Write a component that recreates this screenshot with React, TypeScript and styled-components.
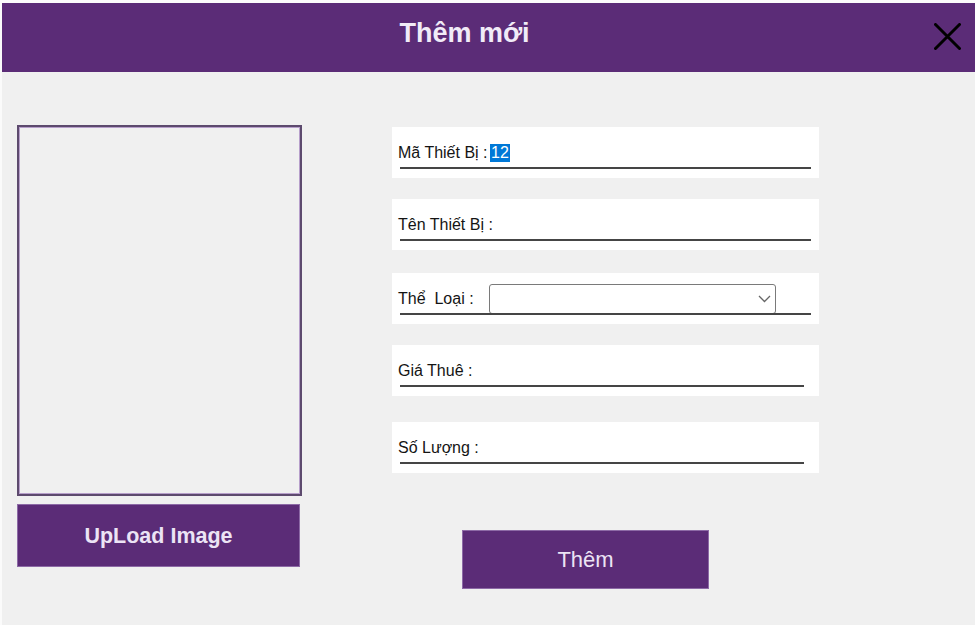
import React from "react";
import styled, { createGlobalStyle } from "styled-components";

const GlobalStyle = createGlobalStyle`
  html, body { margin: 0; padding: 0; }
  body { font-family: "Liberation Sans", Arial, sans-serif; background: #ffffff; }
  * { box-sizing: border-box; }
`;

const PURPLE = "#5B2C77";

const Frame = styled.div`
  width: 975px;
  height: 625px;
  background: #fbfbfb;
  padding: 3px 0 0 2px;
  display: flex;
  flex-direction: column;
  overflow: hidden;
`;

const Header = styled.header`
  height: 69px;
  flex: none;
  background: ${PURPLE};
  display: flex;
  align-items: flex-start;
`;

const Title = styled.h1`
  flex: 1;
  margin: 0;
  padding-top: 17px;
  text-align: center;
  font-size: 27px;
  line-height: 27px;
  font-weight: 700;
  color: #f1ebf7;
`;

const CloseButton = styled.button`
  width: 48px;
  height: 69px;
  border: none;
  background: transparent;
  padding: 20px 0 0 7px;
  display: flex;
  align-items: flex-start;
  justify-content: flex-start;
  cursor: pointer;
`;

const Body = styled.main`
  flex: 1;
  background: #f0f0f0;
  display: flex;
  padding: 53px 0 0 15px;
`;

const LeftColumn = styled.section`
  width: 285px;
  display: flex;
  flex-direction: column;
`;

const ImageBox = styled.div`
  width: 285px;
  height: 371px;
  border: 2px solid #5d4a6e;
  box-shadow: inset 0 0 0 1px #b79fcb;
  background: #f0f0f0;
`;

const PurpleButton = styled.button<{ $bold?: boolean }>`
  border: 1px solid #8d6aa6;
  background: ${PURPLE};
  color: #ece4f5;
  font-family: "Liberation Sans", Arial, sans-serif;
  font-weight: ${(p) => (p.$bold ? 700 : 400)};
  display: flex;
  align-items: center;
  justify-content: center;
  cursor: pointer;
  padding: 0;
`;

const UploadButton = styled(PurpleButton)`
  margin-top: 8px;
  width: 283px;
  height: 63px;
  font-size: 21.5px;
  padding-top: 1px;
`;

const SubmitButton = styled(PurpleButton)`
  margin-top: 57px;
  margin-left: 70px;
  width: 247px;
  height: 59px;
  font-size: 22px;
`;

const RightColumn = styled.section`
  margin-left: 90px;
  margin-top: 2px;
  width: 427px;
  display: flex;
  flex-direction: column;
`;

const FieldCard = styled.div<{ $gap: number }>`
  margin-top: ${(p) => p.$gap}px;
  height: 51px;
  background: #ffffff;
  padding: 17px 0 0 6px;
  display: flex;
  flex-direction: column;
`;

const FieldRow = styled.div`
  height: 18px;
  display: flex;
  align-items: center;
  font-size: 16px;
  line-height: 18px;
  color: #141414;
`;

const Label = styled.span`
  white-space: pre;
`;

const Selected = styled.span`
  margin-left: 2px;
  padding: 0 1.5px;
  background: #0078d7;
  color: #ffffff;
  line-height: 18px;
`;

const Underline = styled.div<{ $width: number }>`
  margin-top: 5px;
  margin-left: 2px;
  width: ${(p) => p.$width}px;
  height: 2px;
  background: #454545;
`;

const SelectBox = styled.div`
  margin-left: 15px;
  width: 287px;
  height: 30px;
  flex: none;
  border: 1px solid #7a7a7a;
  border-radius: 3px;
  background: #ffffff;
  display: flex;
  align-items: center;
  justify-content: flex-end;
  padding-right: 4px;
`;

const fields = [
  { label: "Mã Thiết Bị :", gap: 0, width: 411, value: "12" },
  { label: "Tên Thiết Bị :", gap: 21, width: 411 },
  { label: "Thể  Loại :", gap: 23, width: 411, select: true },
  { label: "Giá Thuê :", gap: 21, width: 404 },
  { label: "Số Lượng :", gap: 26, width: 404 },
];

export default function App() {
  return (
    <>
      <GlobalStyle />
      <Frame>
        <Header>
          <Title>Thêm mới</Title>
          <CloseButton aria-label="Đóng">
            <svg width="27" height="27" viewBox="0 0 27 27">
              <path d="M1.5 1.5 L25.5 25.5 M25.5 1.5 L1.5 25.5" stroke="#000" strokeWidth="3" strokeLinecap="round" fill="none" />
            </svg>
          </CloseButton>
        </Header>
        <Body>
          <LeftColumn>
            <ImageBox />
            <UploadButton $bold>UpLoad Image</UploadButton>
          </LeftColumn>
          <RightColumn>
            {fields.map((f) => (
              <FieldCard key={f.label} $gap={f.gap}>
                <FieldRow>
                  <Label>{f.label}</Label>
                  {f.value && <Selected>{f.value}</Selected>}
                  {f.select && (
                    <SelectBox role="combobox">
                      <svg width="13" height="8" viewBox="0 0 13 8">
                        <path d="M1 1 L6.5 6.5 L12 1" stroke="#666" strokeWidth="1.3" fill="none" />
                      </svg>
                    </SelectBox>
                  )}
                </FieldRow>
                <Underline $width={f.width} />
              </FieldCard>
            ))}
            <SubmitButton>Thêm</SubmitButton>
          </RightColumn>
        </Body>
      </Frame>
    </>
  );
}
